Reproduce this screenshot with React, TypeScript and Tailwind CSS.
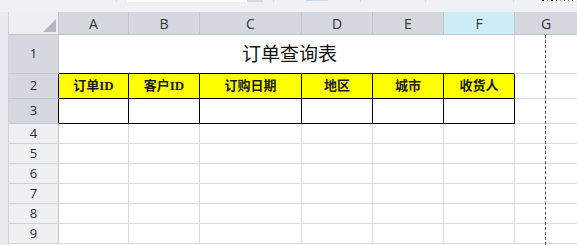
import React from "react";

const cols = [
 {key: "A", w: "w-[70px]"},
 {key: "B", w: "w-[71px]"},
 {key: "C", w: "w-[102px]"},
 {key: "D", w: "w-[71px]"},
 {key: "E", w: "w-[71px]"},
 {key: "F", w: "w-[71px]"},
];

const headers = ["订单ID", "客户ID", "订购日期", "地区", "城市", "收货人"];

const cjk = {fontFamily: '"Liberation Serif", "Noto Sans CJK SC", serif'};

const RowHead: React.FC<{n: number; h: string; active?: boolean; black?: boolean}> = ({n, h, active, black}) => (
 <div
  className={`${h} w-[50px] shrink-0 flex items-center justify-center border-b border-r text-[13px] text-[#2b2b2b] ${
   active ? "bg-[#d5d9df] border-b-[#c3c8d0]" : "bg-[#eef0f4] border-b-[#cfd4dc]"
  } ${black ? "border-r-black" : "border-r-[#c3c8d0]"}`}
 >
  {n}
 </div>
);

export default function App() {
 const plain = [4, 5, 6, 7, 8, 9];

 return (
  <div className="w-[577px] h-[245px] overflow-hidden bg-white" style={{fontFamily: '"Open Sans", "Liberation Sans", sans-serif'}}>
   {/* toolbar remnant */}
   <div className="h-[12px] bg-[#f0f1f5] flex items-start relative">
    <div className="ml-[116px] w-px h-[2px] bg-[#d8dbe0]" />
    <div className="ml-[10px] w-[120px] h-[2px] bg-white" />
    <div className="w-[16px] h-[2px] bg-[#d8dbe0]" />
    <div className="ml-[10px] w-px h-[2px] bg-[#d8dbe0]" />
    <div className="ml-[32px] w-[22px] h-[1px] bg-[#c8daf0]" />
    <div className="ml-[32px] w-px h-[2px] bg-[#d8dbe0]" />
    <div className="ml-[64px] w-px h-[2px] bg-[#d8dbe0]" />
    <div className="ml-[87px] w-px h-[2px] bg-[#d8dbe0]" />
    <div className="ml-[28px] flex gap-[3px] mt-0">
     <span className="w-[2px] h-[1px] bg-black" />
     <span className="w-[1px] h-[1px] bg-[#e38a2b]" />
     <span className="w-[2px] h-[1px] bg-black" />
     <span className="w-[1px] h-[1px] bg-[#444]" />
     <span className="w-[1px] h-[1px] bg-[#e38a2b]" />
     <span className="w-[1px] h-[1px] bg-[#444]" />
     <span className="w-[1px] h-[1px] bg-[#3a7bd5]" />
     <span className="w-[1px] h-[1px] bg-[#444]" />
    </div>
   </div>

   <div className="flex">
    {/* left strip */}
    <div className="w-[9px] shrink-0 h-[233px] bg-[#e9ebef] border-r border-[#d0d4da]" />

    <div className="flex flex-col grow relative">
     {/* column headers */}
     <div className="flex h-[23px] border-b border-[#bfc4cc]">
      <div className="w-[50px] shrink-0 bg-[#eef0f3] border-r border-[#c3c8d0] relative">
       <div className="absolute right-[2px] bottom-[2px] w-0 h-0 border-l-[13px] border-l-transparent border-b-[13px] border-b-[#b4b8be]" />
      </div>
      {cols.map((c) => (
       <div
        key={c.key}
        className={`${c.w} shrink-0 flex items-center justify-center border-r border-[#c3c8d0] text-[14px] text-[#333] ${
         c.key === "F" ? "bg-[#cdeef9]" : "bg-[#d5d9df]"
        }`}
       >
        {c.key}
       </div>
      ))}
      <div className="grow bg-[#d5d9df] flex items-center justify-center text-[14px] text-[#333]">G</div>
     </div>

     {/* row 1: title */}
     <div className="flex h-[39px]">
      <RowHead n={1} h="h-[39px]" active />
      <div
       className="w-[456px] shrink-0 border-b border-black border-r-[#d5dce8] border-r flex items-center justify-center pt-[3px] pl-[6px] text-[19px] text-[#111]"
       style={cjk}
      >
       订单查询表
      </div>
      <div className="grow border-b border-[#d5dce8]" />
     </div>

     {/* row 2: headers */}
     <div className="flex h-[25px]">
      <RowHead n={2} h="h-[25px]" active black />
      {cols.map((c, i) => (
       <div
        key={c.key}
        className={`${c.w} shrink-0 bg-[#ffff00] border-r border-b border-black flex items-center justify-center font-bold text-[13px] text-[#1a1a1a]`}
        style={cjk}
       >
        {headers[i]}
       </div>
      ))}
      <div className="grow border-b border-[#d5dce8]" />
     </div>

     {/* row 3: empty data row */}
     <div className="flex h-[25px]">
      <RowHead n={3} h="h-[25px]" active black />
      {cols.map((c) => (
       <div key={c.key} className={`${c.w} shrink-0 border-r border-b border-black`} />
      ))}
      <div className="grow border-b border-[#d5dce8]" />
     </div>

     {plain.map((n) => (
      <div key={n} className="flex h-[20px]">
       <RowHead n={n} h="h-[20px]" />
       {cols.map((c) => (
        <div key={c.key} className={`${c.w} shrink-0 border-r border-b border-[#d5dce8]`} />
       ))}
       <div className="grow border-b border-[#d5dce8]" />
      </div>
     ))}

     {/* page break line */}
     <div className="absolute left-[536px] top-[23px] h-[210px] border-l border-dashed border-[#555]" />
    </div>
   </div>
  </div>
 );
}
